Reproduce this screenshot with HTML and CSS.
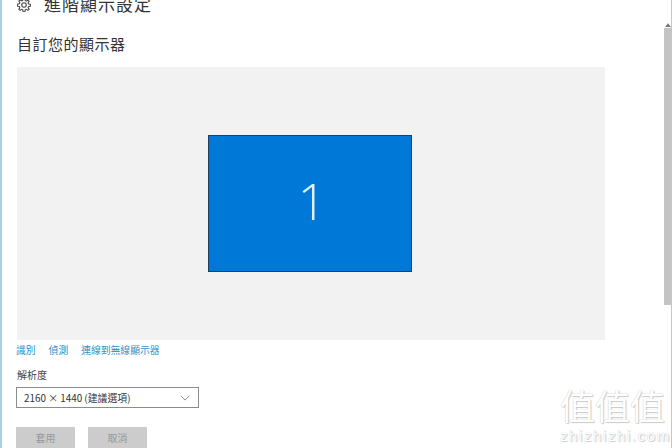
FILE: index.html
```html
<!DOCTYPE html>
<html lang="zh-Hant">
  <head>
    <meta charset="UTF-8" />
    <title>進階顯示設定</title>
    <link rel="stylesheet" href="styles.css">
  </head>
  <body>
    <div class="window">
      <div class="content">
        <div class="page-title">
          <svg class="gear" viewBox="0 0 16 16" width="14" height="14">
            <circle cx="8" cy="8" r="2.6" />
            <path d="M6.9 1h2.2l.3 2 1.3.6 1.7-1.2 1.5 1.5-1.2 1.7.6 1.3 2 .3v2.2l-2 .3-.6 1.3 1.2 1.7-1.5 1.5-1.7-1.2-1.3.6-.3 2H6.9l-.3-2-1.3-.6-1.7 1.2-1.5-1.5 1.2-1.7-.6-1.3-2-.3V6.9l2-.3.6-1.3-1.2-1.7 1.5-1.5 1.7 1.2 1.3-.6z" />
          </svg>
          <span>進階顯示設定</span>
        </div>

        <h2 class="section-title">自訂您的顯示器</h2>

        <div class="display-area">
          <div class="monitor">1</div>
        </div>

        <div class="links">
          <a>識別</a>
          <a>偵測</a>
          <a>連線到無線顯示器</a>
        </div>

        <div class="field-label">解析度</div>
        <div class="select">
          <span>2160 × 1440 (建議選項)</span>
          <svg viewBox="0 0 12 7" width="10" height="6">
            <path d="M1 1l5 5 5-5" />
          </svg>
        </div>

        <div class="buttons">
          <div class="btn">套用</div>
          <div class="btn">取消</div>
        </div>
      </div>

      <div class="scrollbar">
        <div class="scroll-arrow">
          <svg viewBox="0 0 8 5" width="6" height="4"><path d="M0 5l4-5 4 5z" /></svg>
        </div>
        <div class="scroll-thumb"></div>
      </div>

      <div class="watermark">
        <div class="wm-chars">值值值</div>
        <div class="wm-url">zhizhizhi.com</div>
      </div>
    </div>
  </body>
</html>
```

FILE: styles.css
```css
* {
  margin: 0;
  padding: 0;
  box-sizing: border-box;
}

body,
html {
  height: 100%;
  width: 100%;
  overflow: hidden;
  background-color: #fff;
  font-family: "Noto Sans CJK TC", "Liberation Sans", sans-serif;
}

.window {
  width: 100%;
  height: 100%;
  display: flex;
  position: relative;
  overflow: hidden;
  border-left: 2px solid #a9cfe3;
}

.content {
  flex: 1;
  padding-left: 14px;
  margin-top: -9px;
}

.page-title {
  display: flex;
  align-items: center;
  gap: 13px;
  height: 24px;
  margin-left: 1px;
  font-size: 17px;
  letter-spacing: 1px;
  color: #333;
}

.gear {
  margin-top: 4px;
  fill: none;
  stroke: #444;
  stroke-width: 1.2;
}

.section-title {
  margin-top: 19px;
  margin-left: 1px;
  font-size: 15px;
  letter-spacing: 0.5px;
  line-height: 20px;
  font-weight: 400;
  color: #333;
}

.display-area {
  width: 588px;
  height: 273px;
  margin-top: 13px;
  margin-left: 1px;
  padding-right: 2px;
  padding-bottom: 1px;
  display: flex;
  align-items: center;
  justify-content: center;
  background-color: #f2f2f2;
}

.monitor {
  width: 204px;
  height: 137px;
  padding-left: 4px;
  padding-bottom: 5px;
  display: flex;
  align-items: center;
  justify-content: center;
  background-color: #0078d7;
  border: 1px solid #1f3f5c;
  color: #dff1fb;
  font-family: "Open Sans", "Liberation Sans", sans-serif;
  font-weight: 300;
  font-size: 50px;
}

.links {
  display: flex;
  gap: 13px;
  margin-top: 2px;
  font-size: 9.8px;
  line-height: 16px;
  color: #2f8fc6;
}

.field-label {
  margin-top: 10px;
  margin-left: 1px;
  font-size: 10px;
  line-height: 14px;
  color: #444;
}

.select {
  width: 183px;
  height: 21px;
  margin-top: 5px;
  padding: 0 8px 0 7px;
  display: flex;
  align-items: center;
  justify-content: space-between;
  border: 1px solid #8c8c8c;
  font-size: 9.9px;
  color: #333;
}

.select svg {
  fill: none;
  stroke: #777;
  stroke-width: 1;
}

.buttons {
  display: flex;
  gap: 13px;
  margin-top: 19px;
}

.btn {
  width: 59px;
  height: 21px;
  display: flex;
  align-items: center;
  justify-content: center;
  background-color: #cccccc;
  font-size: 10px;
  color: #999;
}

.scrollbar {
  width: 8px;
  margin-left: auto;
  padding-top: 22px;
  background-color: #fff;
  border-right: 1px solid #a9cfe3;
}

.scroll-arrow {
  height: 6px;
  display: flex;
  align-items: center;
  justify-content: center;
  fill: #777;
}

.scroll-thumb {
  height: 277px;
  background-color: #c4c4c4;
}

.watermark {
  position: absolute;
  right: 7px;
  bottom: 5px;
  width: 105px;
  text-align: center;
  color: #fff;
  text-shadow: 0 0 1px #bbb, 1px 1px 1px #ccc;
}

.wm-chars {
  font-size: 35px;
  line-height: 48px;
  white-space: nowrap;
}

.wm-url {
  font-family: "Liberation Sans", sans-serif;
  font-size: 15px;
  line-height: 14px;
  letter-spacing: 1.6px;
  white-space: nowrap;
}
```
